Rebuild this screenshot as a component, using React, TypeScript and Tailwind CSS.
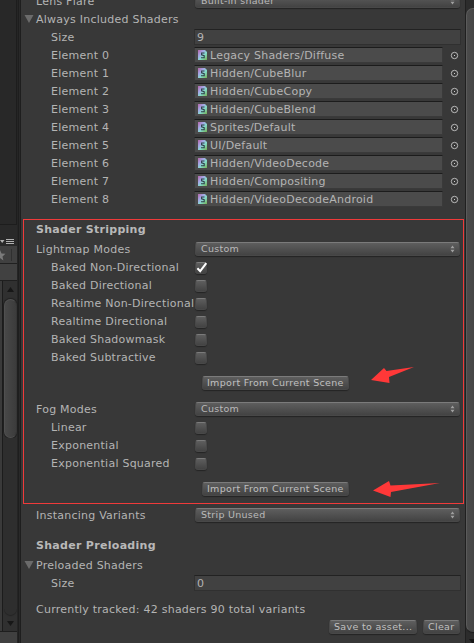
import React from 'react';

const labelText = 'text-[11px] tracking-[0.24px] text-[#b4b4b4]';

function Row({ label, indent = false, children }: { label: string; indent?: boolean; children?: React.ReactNode }) {
  return (
    <div className="flex h-[18px] shrink-0 items-center">
      <div className={`flex h-full w-[173px] shrink-0 items-center ${indent ? 'pl-[30px]' : 'pl-[15px]'} ${labelText}`}>{label}</div>
      {children}
    </div>
  );
}

function Foldout({ label }: { label: string }) {
  return (
    <div className="flex h-[18px] shrink-0 items-center pl-[3px]">
      <svg width="12" height="10" viewBox="0 0 12 10" className="shrink-0"><path d="M.5 1h9L5 9z" fill="#6b6b6b" /></svg>
      <span className={labelText}>{label}</span>
    </div>
  );
}

function Field({ value }: { value: string }) {
  return (
    <div className="flex h-4 w-[267px] items-center border border-[#303030] border-t-[#222] bg-[#414141] pl-[2px] text-[11px] text-[#b4b4b4]">{value}</div>
  );
}

function ShaderIcon() {
  return (
    <svg width="9" height="10" viewBox="0 0 9 10" className="shrink-0">
      <defs>
        <linearGradient id="sh" x1="0" y1="0" x2="1" y2="1">
          <stop offset="0" stopColor="#b565a8" /><stop offset=".35" stopColor="#a3a8e6" /><stop offset=".6" stopColor="#84dccb" /><stop offset="1" stopColor="#74b052" />
        </linearGradient>
      </defs>
      <path d="M0 0h7l2 2v8H0z" fill="url(#sh)" />
      <path d="M6.5 3H3.6v1.9L6.2 5.6v2.1H3" fill="none" stroke="#2f4048" strokeWidth="1.1" />
    </svg>
  );
}

function ObjectField({ value }: { value: string }) {
  return (
    <>
      <div className="flex h-4 w-[249px] items-center border border-[#3a3a3a] border-t-[#1c1c1c] bg-[#4b4b4b] pl-[3px]">
        <ShaderIcon />
        <span className="pl-[3px] text-[11px] tracking-[0.22px] whitespace-nowrap text-[#b4b4b4]">{value}</span>
      </div>
      <svg width="9" height="9" viewBox="0 0 9 9" className="ml-[7px]"><circle cx="4.5" cy="4.5" r="3.2" fill="none" stroke="#b9b9b9" /><rect x="4" y="4" width="1" height="1" fill="#ccc" /></svg>
    </>
  );
}

const raised = 'rounded-[3px] border border-[#484848] border-t-[#7b7b7b] bg-linear-to-b from-[#5e5e5e] to-[#434343] shadow-[0_1px_1px_#242424]';

function Popup({ value }: { value: string }) {
  return (
    <div className={`ml-px flex h-[14px] w-[265px] items-center justify-between pr-1 pl-[5px] ${raised}`}>
      <span className="text-[9.5px] leading-[12px] tracking-[0.28px] text-[#bababa]">{value}</span>
      <svg width="5" height="8" viewBox="0 0 5 8"><path d="M2.5 .5 4.5 3.3h-4zM.5 4.7h4L2.5 7.5z" fill="#a0a0a0" /></svg>
    </div>
  );
}

function Button({ children, className }: { children: string; className: string }) {
  return (
    <button className={`flex h-[14px] shrink-0 items-center pl-[4px] text-[9.5px] leading-[12px] tracking-[0.32px] whitespace-nowrap text-[#c0c0c0] ${raised} ${className}`}>{children}</button>
  );
}

function Check({ checked = false }: { checked?: boolean }) {
  return (
    <span className={`mt-[2px] ml-px block h-3 w-3 ${raised}`}>
      {checked && (
        <svg width="12" height="12" viewBox="0 0 12 12" className="-mt-px -ml-px overflow-visible"><path d="M2.4 6.2 5.2 9.2 11.3 1.2" fill="none" stroke="#fff" strokeWidth="2" /></svg>
      )}
    </span>
  );
}

const shaders = ['Legacy Shaders/Diffuse', 'Hidden/CubeBlur', 'Hidden/CubeCopy', 'Hidden/CubeBlend', 'Sprites/Default', 'UI/Default', 'Hidden/VideoDecode', 'Hidden/Compositing', 'Hidden/VideoDecodeAndroid'];
const lightmapModes = ['Baked Non-Directional', 'Baked Directional', 'Realtime Non-Directional', 'Realtime Directional', 'Baked Shadowmask', 'Baked Subtractive'];
const fogModes = ['Linear', 'Exponential', 'Exponential Squared'];

function LeftDock() {
  return (
    <div className="flex h-full w-[21px] shrink-0 bg-[#252525]">
      <div className="flex w-[17px] flex-col">
        <div className="h-[225px] shrink-0 border-r border-b border-[#1d1d1d] bg-[#282828]" />
        <div className="flex h-[21px] shrink-0 items-end bg-[#292929] pb-[2px]">
          <svg width="15" height="5" viewBox="0 0 15 5"><path d="M0 1h4.5L2.2 4zM6 0h8v1H6zM6 2h8v1H6zM6 4h8v1H6z" fill="#b0b0b0" /></svg>
        </div>
        <div className="flex h-[18px] shrink-0 items-center border-b border-[#202020] bg-[#404040]">
          <svg width="12" height="12" viewBox="0 0 12 12"><path d="m0 1 1.5 3.5 4 .3-3 2.6.9 4L0 9z" fill="#7a7a7a" /><path d="M11.5 0v12" stroke="#303030" /></svg>
        </div>
        <div className="h-[17px] shrink-0 border-b border-[#1f1f1f] bg-[#414141]" />
        <div className="flex h-[350px] shrink-0">
          <div className="w-[3px] shrink-0 border-r border-[#1c1c1c] bg-[#3a3a3a]" />
          <div className="flex w-[14px] flex-col items-center bg-[#303030]">
            <svg width="7" height="18" viewBox="0 0 7 18" className="shrink-0"><path d="M3.5 6 7 11H0z" fill="#171717" /></svg>
            <div className="h-[139px] w-[13px] shrink-0 rounded-full border border-[#505050] border-r-[#363636] bg-linear-to-r from-[#484848] to-[#3c3c3c] shadow-[0_0_1px_1px_#202020]" />
            <div className="h-[177px] w-[13px] rounded-b-full bg-[#2e2e2e] shadow-[0_1px_1px_#242424]" />
            <svg width="7" height="16" viewBox="0 0 7 16" className="shrink-0"><path d="M0 6h7L3.5 11z" fill="#171717" /></svg>
          </div>
        </div>
        <div className="flex-1 border-t border-[#1e1e1e] bg-[#404040]" />
      </div>
      <div className="ml-[1px] w-[3px] border-x border-[#1e1e1e] bg-[#292929]" />
    </div>
  );
}

export default function App() {
  return (
    <div className="flex h-[643px] w-[474px] overflow-hidden bg-[#383838] font-['DejaVu_Sans',sans-serif] leading-none">
      <LeftDock />
      <main className="-mt-2 flex h-[651px] w-[444px] shrink-0 flex-col whitespace-nowrap">
        <Row label="Lens Flare"><Popup value="Built-in shader" /></Row>
        <Foldout label="Always Included Shaders" />
        <Row label="Size" indent><Field value="9" /></Row>
        {shaders.map((s, i) => <Row key={s} label={`Element ${i}`} indent><ObjectField value={s} /></Row>)}
        <section className="relative mt-[11px] ml-[2px] flex h-[285px] w-[441px] shrink-0 flex-col border border-[#f03a3a]">
          <h2 className="flex h-[18px] shrink-0 items-center pl-3 text-[11px] font-bold tracking-[0.28px] text-[#b8b8b8]">Shader Stripping</h2>
          <div className="mt-[2px] -ml-[3px]">
            <Row label="Lightmap Modes"><Popup value="Custom" /></Row>
            {lightmapModes.map((m, i) => <Row key={m} label={m} indent><Check checked={i === 0} /></Row>)}
          </div>
          <Button className="mt-[10px] ml-[178px] w-[147px]">Import From Current Scene</Button>
          <div className="mt-[10px] -ml-[3px]">
            <Row label="Fog Modes"><Popup value="Custom" /></Row>
            {fogModes.map((m) => <Row key={m} label={m} indent><Check /></Row>)}
          </div>
          <Button className="mt-[10px] ml-[178px] w-[147px]">Import From Current Scene</Button>
          <svg width="44" height="17" viewBox="371 366 44 17" className="absolute top-[146px] left-[347px]"><path d="M371 380 384 368l2.5 3L414 367l-25 10 .5 6z" fill="#ff3838" /></svg>
          <svg width="68" height="17" viewBox="373 480 68 17" className="absolute top-[260px] left-[349px]"><path d="M373 490.5 389 481l1.5 4.5L440 483l-49 9-.5 5z" fill="#ff3838" /></svg>
        </section>
        <div className="mt-[2px]"><Row label="Instancing Variants"><Popup value="Strip Unused" /></Row></div>
        <h2 className="mt-3 flex h-[18px] shrink-0 items-center pl-[15px] text-[11px] font-bold tracking-[0.3px] text-[#b8b8b8]">Shader Preloading</h2>
        <div className="mt-[2px]">
          <Foldout label="Preloaded Shaders" />
          <Row label="Size" indent><Field value="0" /></Row>
        </div>
        <p className={`mt-2 flex h-[18px] items-center pl-[15px] ${labelText}`}>Currently tracked: 42 shaders 90 total variants</p>
        <div className="mt-[2px] flex gap-[6px] pl-[308px]">
          <Button className="w-[88px]">Save to asset...</Button>
          <Button className="w-[37px]">Clear</Button>
        </div>
      </main>
      <aside className="flex w-[9px] flex-col overflow-hidden border-l border-[#202020] bg-[#2c2c2c] pt-[8px]">
        <div className="h-[624px] w-[14px] shrink-0 rounded-full border border-[#5b5b5b] border-b-[#444] bg-linear-to-r from-[#4b4b4b] to-[#404040] shadow-[0_1px_1px_#1c1c1c]" />
        <svg width="8" height="11" viewBox="0 0 8 11" className="shrink-0"><path d="M3 7h8L7 12z" fill="#151515" /></svg>
      </aside>
    </div>
  );
}
